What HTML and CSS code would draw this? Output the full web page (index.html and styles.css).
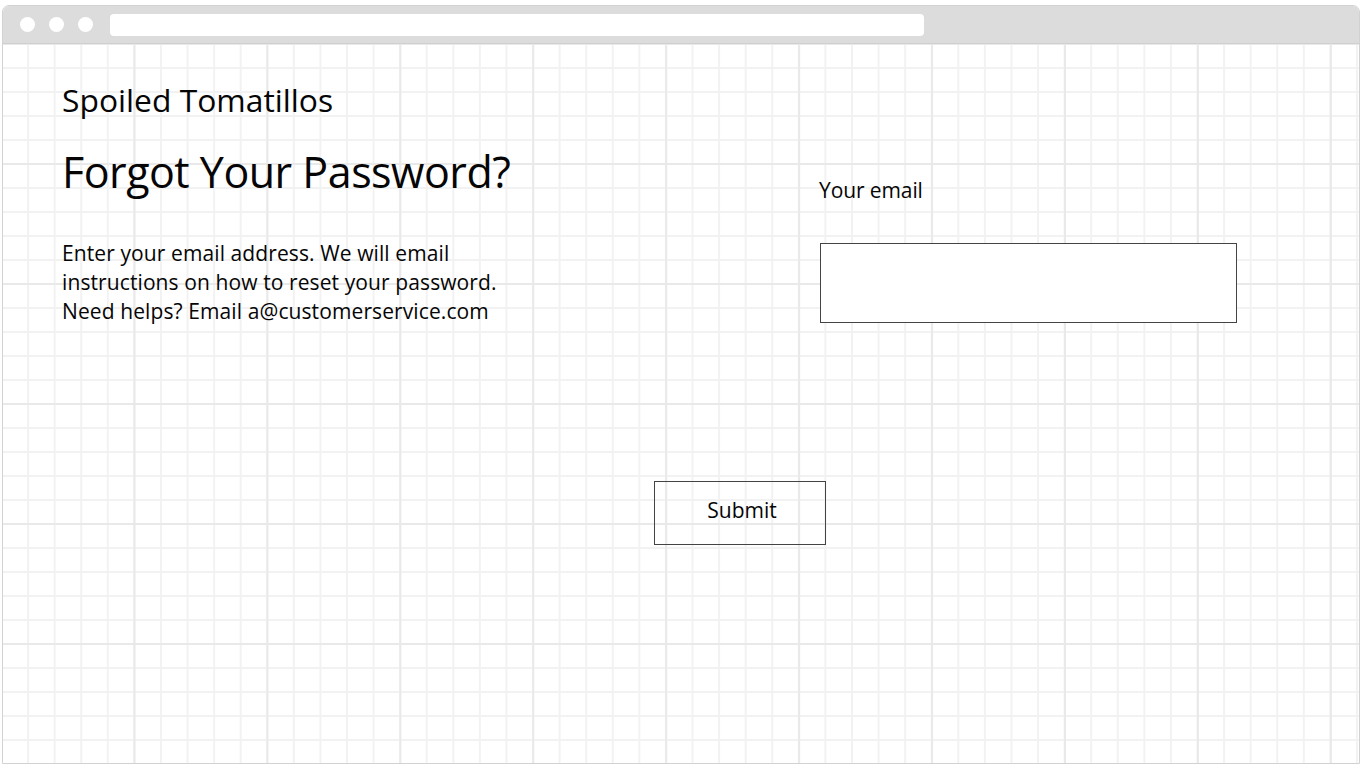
FILE: index.html
```html
<!DOCTYPE html>
<html lang="en">
<head>
<meta charset="utf-8">
<title>Spoiled Tomatillos - Forgot Your Password?</title>
<link rel="stylesheet" href="styles.css">
</head>
<body>
<div class="window">
  <div class="titlebar">
    <div class="dots">
      <span class="dot"></span>
      <span class="dot"></span>
      <span class="dot"></span>
    </div>
    <div class="address"></div>
  </div>
  <main class="canvas">
    <div class="top">
      <section class="intro">
        <div class="brand">Spoiled Tomatillos</div>
        <h1 class="title">Forgot Your Password?</h1>
        <p class="text">Enter your email address. We will email<br>instructions on how to reset your password.<br>Need helps? Email a@customerservice.com</p>
      </section>
      <section class="form">
        <label class="label" for="email">Your email</label>
        <input class="input" id="email" type="email">
      </section>
    </div>
    <div class="actions">
      <button class="submit" type="button">Submit</button>
    </div>
  </main>
</div>
</body>
</html>
```
FILE: styles.css
```css
html, body {
  margin: 0;
  padding: 0;
  background: #ffffff;
}
body {
  font-family: "Open Sans", "Liberation Sans", sans-serif;
  color: #050505;
}
.window {
  margin: 5px 6px 0 2px;
  height: 759px;
  box-sizing: border-box;
  border: 1px solid #d2d2d2;
  border-radius: 7px 7px 0 0;
  display: flex;
  flex-direction: column;
  overflow: hidden;
}
.titlebar {
  height: 38px;
  flex: none;
  box-sizing: border-box;
  background: #dcdcdc;
  border-bottom: 1px solid #cfcfcf;
  display: flex;
  align-items: center;
  padding-left: 17px;
}
.dots {
  display: flex;
  gap: 14px;
}
.dot {
  width: 15px;
  height: 15px;
  border-radius: 50%;
  background: #ffffff;
}
.address {
  margin-left: 17px;
  width: 814px;
  height: 22px;
  background: #ffffff;
  border-radius: 4px;
}
.canvas {
  flex: 1;
  background-color: #ffffff;
  background-image:
    linear-gradient(to right, #e9e9e9 2px, transparent 2px),
    linear-gradient(to bottom, #e9e9e9 2px, transparent 2px),
    linear-gradient(to right, #f2f2f2 2px, transparent 2px),
    linear-gradient(to bottom, #f2f2f2 2px, transparent 2px);
  background-size:
    132.95px 120px,
    132.95px 120px,
    26.59px 24px,
    26.59px 24px;
  background-position:
    -2.5px -1px,
    -2.5px -1px,
    -2.5px -1px,
    -2.5px -1px;
  padding: 36px 0 0 59px;
}
.top {
  display: flex;
}
.intro {
  width: 757px;
  flex: none;
}
.brand {
  font-size: 31.8px;
  line-height: 40px;
}
.title {
  margin: 24px 0 0 0;
  font-weight: 400;
  font-size: 43px;
  line-height: 56px;
  letter-spacing: -0.5px;
}
.text {
  margin: 38.5px 0 0 0;
  font-size: 21px;
  line-height: 29px;
  letter-spacing: 0.1px;
}
.form {
  display: flex;
  flex-direction: column;
  padding-top: 96px;
}
.label {
  font-size: 21px;
  line-height: 28px;
  letter-spacing: -0.1px;
}
.input {
  margin: 39px 0 0 1px;
  width: 417px;
  height: 80px;
  box-sizing: border-box;
  border: 1px solid #444444;
  background: #ffffff;
  border-radius: 0;
  padding: 0;
}
.actions {
  padding: 155px 0 0 592px;
}
.submit {
  width: 172px;
  height: 64px;
  box-sizing: border-box;
  border: 1px solid #444444;
  background: transparent;
  font-family: "Open Sans", "Liberation Sans", sans-serif;
  font-size: 21px;
  color: #050505;
  padding: 0 0 6px 4px;
  cursor: pointer;
}
```
